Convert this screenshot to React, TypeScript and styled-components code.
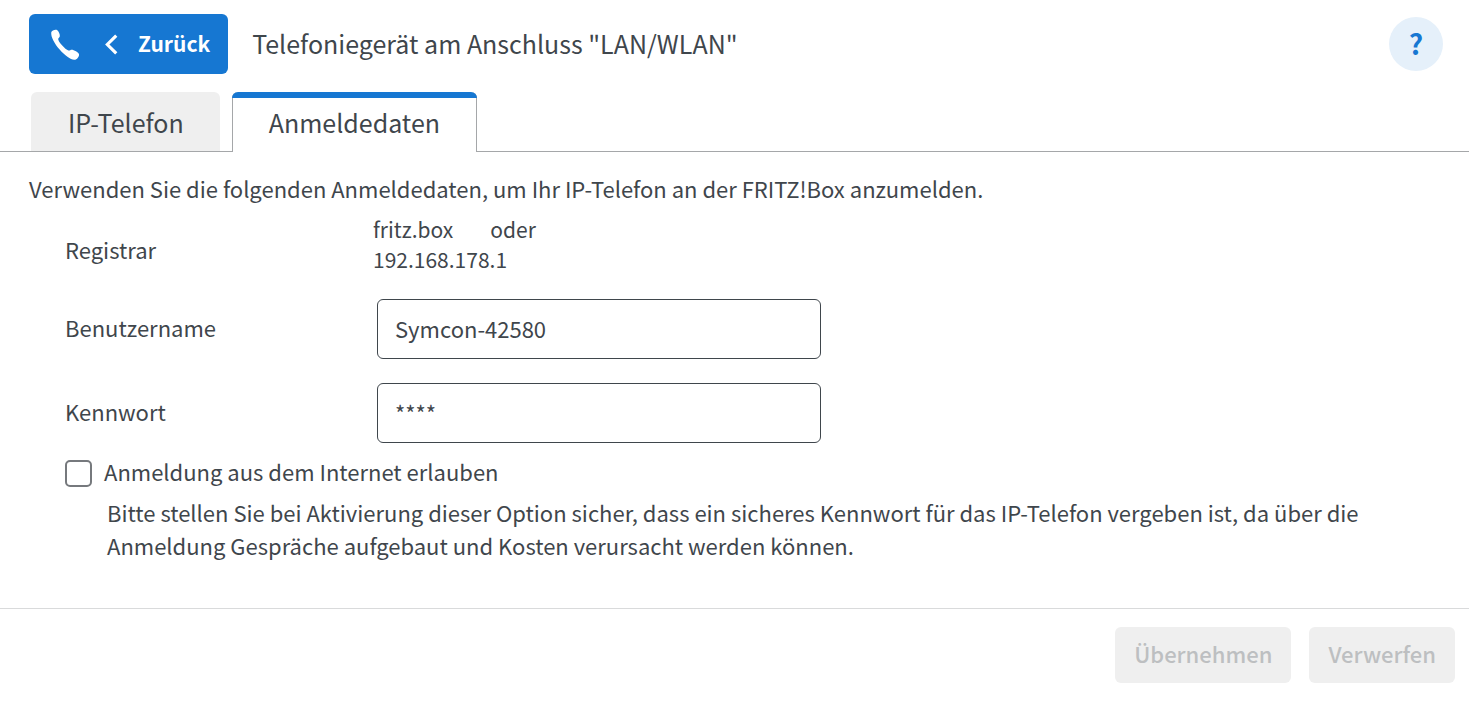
import React, { useState } from "react";
import styled, { createGlobalStyle } from "styled-components";

const GlobalStyle = createGlobalStyle`
  *, *::before, *::after { box-sizing: border-box; }
  body {
    margin: 0;
    background: #fff;
    color: #3f464c;
    font-family: "Noto Sans CJK SC", "Noto Sans", sans-serif;
    font-size: 22px;
    line-height: 32px;
  }
  button, input { font: inherit; color: inherit; }
`;

const Header = styled.header`
  display: flex;
  align-items: center;
  gap: 24px;
  padding: 14px 26px 0 29px;
`;

const BackButton = styled.button`
  display: flex;
  align-items: center;
  height: 60px;
  padding: 0 18px 0 20px;
  border: 0;
  border-radius: 6px;
  background: #1677d2;
  color: #fff;
  font-size: 21px;
  font-weight: 700;
  cursor: pointer;
`;

const BackPhone = styled.svg`
  margin-right: 22px;
`;

const BackChevron = styled.svg`
  margin-right: 20px;
`;

const BackText = styled.span`
  padding-bottom: 2px;
`;

const Title = styled.h1`
  flex: 1;
  margin: 0;
  padding-bottom: 2px;
  font-size: 25px;
  font-weight: 400;
`;

const HelpButton = styled.button`
  display: grid;
  place-items: center;
  width: 54px;
  height: 54px;
  padding: 0 0 2px;
  border: 0;
  border-radius: 50%;
  background: #e5f0fa;
  color: #1677d2;
  font-size: 28px;
  font-weight: 700;
  cursor: pointer;
`;

const Tabs = styled.nav`
  display: flex;
  gap: 12px;
  margin-top: 18px;
  padding-left: 31px;
  box-shadow: inset 0 -1px 0 #a5a7a9;
`;

const Tab = styled.a<{ $active?: boolean }>`
  height: 60px;
  padding: ${(p) => (p.$active ? "8px 36px 0" : "14px 36px 0 37px")};
  border: solid #a5a7a9;
  border-width: ${(p) => (p.$active ? "0 1px" : "0 0 1px")};
  border-radius: 6px 6px 0 0;
  background: ${(p) => (p.$active ? "#fff" : "#efefef")};
  color: inherit;
  font-size: 25px;
  text-decoration: none;

  &::before {
    content: "";
    display: ${(p) => (p.$active ? "block" : "none")};
    height: 6px;
    margin: -8px -37px 8px;
    border-radius: 6px 6px 0 0;
    background: #1677d2;
  }
`;

const Content = styled.main`
  padding: 20px 29px 46px;
`;

const Intro = styled.p`
  margin: 0 0 10px;
`;

const Form = styled.form`
  padding-left: 36px;
`;

const Row = styled.div`
  display: flex;
  align-items: center;
  margin-bottom: 24px;
`;

const RegistrarRow = styled(Row)`
  margin-bottom: 25px;
`;

const RowLabel = styled.label`
  flex: 0 0 312px;
  padding-bottom: 4px;
`;

const RegistrarLabel = styled.span`
  flex: 0 0 308px;
  padding-top: 10px;
`;

const RegistrarValue = styled.div`
  font-size: 21px;
  line-height: 30px;
`;

const Host = styled.span`
  margin-right: 37px;
`;

const TextInput = styled.input`
  flex: 0 1 444px;
  min-width: 0;
  height: 60px;
  padding: 0 17px 2px;
  border: 1px solid #3f464c;
  border-radius: 6px;
  background: #fff;
  outline: 0;
`;

const CheckLabel = styled.label`
  display: flex;
  align-items: center;
  gap: 12px;
  margin-top: -12px;
`;

const CheckText = styled.span`
  padding-bottom: 4px;
`;

const Checkbox = styled.input`
  appearance: none;
  width: 27px;
  height: 27px;
  margin: 0;
  border: 2px solid #76797d;
  border-radius: 5px;
  background: #fff;

  &:checked {
    background: #1677d2;
  }
`;

const Hint = styled.p`
  margin: 5px 0 0 42px;
  line-height: 33px;
`;

const Footer = styled.footer`
  display: flex;
  justify-content: flex-end;
  gap: 18px;
  padding: 18px 14px;
  border-top: 1px solid #d9dadb;
`;

const FooterButton = styled.button`
  height: 56px;
  padding: 0 19px 4px;
  border: 0;
  border-radius: 6px;
  background: #efefef;
  color: #bdbfc1;
  font-weight: 500;
`;

export default function App() {
  const [user, setUser] = useState("Symcon-42580");
  const [password, setPassword] = useState("****");

  return (
    <>
      <GlobalStyle />
      <Header>
        <BackButton type="button">
          <BackPhone width="33" height="33" viewBox="0 0 32 32" fill="#fff" aria-hidden="true">
            <path d="M2.2 4.2C2.8 2.3 6.2 1 7.800 2c1.700 1.100 3 4.400 2.700 6-.2 1.100-1.400 1.700-1.600 2.600-.3 2.200 7 10.400 9.900 11.100 1.300.3 2-.7 3.200-.7 2 0 6.800 2.600 7.100 4.400.4 2.200-2 5.300-4.500 5.500C18.200 31.300 1 13.500 2.200 4.200Z" />
          </BackPhone>
          <BackChevron width="14" height="21" viewBox="0 0 13 20" fill="none" stroke="#fff" strokeWidth="3" aria-hidden="true">
            <path d="M11.500 1.500 3 10l8.500 8.500" />
          </BackChevron>
          <BackText>Zurück</BackText>
        </BackButton>
        <Title>Telefoniegerät am Anschluss "LAN/WLAN"</Title>
        <HelpButton type="button" aria-label="Hilfe">?</HelpButton>
      </Header>

      <Tabs>
        <Tab href="#ip-telefon">IP-Telefon</Tab>
        <Tab href="#anmeldedaten" $active aria-current="page">Anmeldedaten</Tab>
      </Tabs>

      <Content>
        <Intro>Verwenden Sie die folgenden Anmeldedaten, um Ihr IP-Telefon an der FRITZ!Box anzumelden.</Intro>
        <Form id="credentials">
          <RegistrarRow>
            <RegistrarLabel>Registrar</RegistrarLabel>
            <RegistrarValue>
              <Host>fritz.box</Host>oder
              <br />
              192.168.178.1
            </RegistrarValue>
          </RegistrarRow>
          <Row>
            <RowLabel htmlFor="username">Benutzername</RowLabel>
            <TextInput id="username" value={user} onChange={(e) => setUser(e.target.value)} />
          </Row>
          <Row>
            <RowLabel htmlFor="password">Kennwort</RowLabel>
            <TextInput id="password" value={password} onChange={(e) => setPassword(e.target.value)} />
          </Row>
          <CheckLabel>
            <Checkbox type="checkbox" />
            <CheckText>Anmeldung aus dem Internet erlauben</CheckText>
          </CheckLabel>
          <Hint>
            Bitte stellen Sie bei Aktivierung dieser Option sicher, dass ein sicheres Kennwort für das IP-Telefon
            vergeben ist, da über die Anmeldung Gespräche aufgebaut und Kosten verursacht werden können.
          </Hint>
        </Form>
      </Content>

      <Footer>
        <FooterButton type="submit" form="credentials" disabled>Übernehmen</FooterButton>
        <FooterButton type="reset" form="credentials" disabled>Verwerfen</FooterButton>
      </Footer>
    </>
  );
}
